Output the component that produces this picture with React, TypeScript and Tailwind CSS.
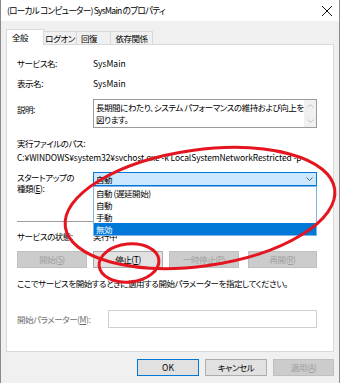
import React from 'react';

const font = "font-['Noto_Sans_CJK_JP',sans-serif] [font-feature-settings:'palt']";

function Mn({ c }: { c: string }) {
  return <span className="underline underline-offset-1">{c}</span>;
}

function Btn({ children, disabled, w, primary }: { children: React.ReactNode; disabled?: boolean; w: string; primary?: boolean }) {
  return (
    <div
      className={`${w} h-[17px] flex items-center justify-center border ${
        disabled
          ? 'bg-[#cccccc] border-[#bfbfbf] text-[#a0a0a0]'
          : primary
          ? 'bg-[#e1e1e1] border-[#0078d7] text-black'
          : 'bg-[#e1e1e1] border-[#adadad] text-black'
      }`}
    >
      {children}
    </div>
  );
}

export default function App() {
  return (
    <div className={`${font} relative w-[340px] h-[383px] overflow-hidden bg-[#f0f0f0] border-x border-[#8a8a8a] text-[8.5px] tracking-[-0.45px] text-black`}>
      {/* Title bar */}
      <div className="h-[21px] bg-white flex items-center justify-between pl-[6px] pr-[5px]">
        <span className="text-[8.6px] tracking-[-0.75px]">(ローカル コンピューター) SysMain のプロパティ</span>
        <svg width="12" height="12" viewBox="0 0 12 12" className="mr-[1px]">
          <path d="M1 1 L11 11 M11 1 L1 11" stroke="#111" strokeWidth="1" fill="none" />
        </svg>
      </div>

      {/* Tabs */}
      <div className="pl-[5px] pt-[8px] flex items-end h-[23px] whitespace-nowrap">
        <div className="relative z-10 h-[16px] -mb-px w-[38px] bg-white border border-b-0 border-[#d9d9d9] flex items-center pl-[5px]">全般</div>
        <div className="h-[13px] w-[33px] border border-l-0 border-b-0 border-[#d9d9d9] bg-[#f0f0f0] flex items-center justify-center">ログオン</div>
        <div className="h-[13px] w-[34px] border border-l-0 border-b-0 border-[#d9d9d9] bg-[#f0f0f0] flex items-center pl-[4px]">回復</div>
        <div className="h-[13px] w-[42px] border border-l-0 border-b-0 border-[#d9d9d9] bg-[#f0f0f0] flex items-center justify-center">依存関係</div>
      </div>

      {/* Panel */}
      <div className="ml-[5px] w-[328px] h-[308px] bg-white border border-[#d9d9d9] pl-[10px] pt-[10px]">
        <div className="flex h-[16px] items-center">
          <div className="w-[76px]">サービス名:</div>
          <div className="tracking-normal">SysMain</div>
        </div>
        <div className="flex h-[16px] items-center mt-[4px]">
          <div className="w-[76px]">表示名:</div>
          <div className="tracking-normal">SysMain</div>
        </div>
        <div className="flex mt-[8px]">
          <div className="w-[76px] pt-[2px] leading-[16px]">説明:</div>
          <div className="relative w-[224px] h-[29px] border border-[#9a9a9a] flex">
            <div className="flex-1 pl-[2px] pt-px leading-[12px]">
              長期間にわたり、システム パフォーマンスの維持および向上を図ります。
            </div>
            <div className="w-[12px] h-full bg-[#f0f0f0] flex flex-col items-center justify-between py-[4px]">
              <svg width="7" height="4" viewBox="0 0 7 4">
                <path d="M0.5 3.5 L3.5 0.5 L6.5 3.5" stroke="#c2c2c2" fill="none" />
              </svg>
              <svg width="7" height="4" viewBox="0 0 7 4">
                <path d="M0.5 0.5 L3.5 3.5 L6.5 0.5" stroke="#c2c2c2" fill="none" />
              </svg>
            </div>
          </div>
        </div>
        <div className="mt-[8px] h-[14px] leading-[14px]">実行ファイルのパス:</div>
        <div className="h-[14px] leading-[14px] tracking-[-0.1px] whitespace-nowrap">C:¥WINDOWS¥system32¥svchost.exe -k LocalSystemNetworkRestricted -p</div>

        <div className="flex mt-[8px]">
          <div className="w-[76px] leading-[11px]">
            <div>スタートアップの</div>
            <div>
              種類(<Mn c="E" />):
            </div>
          </div>
          <div className="relative w-[224px] h-[14px] bg-[#cce8ff] border border-[#0078d7] flex items-center justify-between pl-[2px] pr-[3px]">
            <span>自動</span>
            <svg width="7" height="4" viewBox="0 0 7 4">
              <path d="M0.5 0.5 L3.5 3.5 L6.5 0.5" stroke="#606060" fill="none" />
            </svg>
            {/* open list */}
            <div className="absolute left-[-1px] top-[13px] z-10 w-[224px] bg-white border border-[#7eb4ea]">
              <div className="h-[12px] leading-[12px] pl-[2px]">自動 (遅延開始)</div>
              <div className="h-[12px] leading-[12px] pl-[2px]">自動</div>
              <div className="h-[12px] leading-[12px] pl-[2px]">手動</div>
              <div className="h-[12px] leading-[12px] pl-[2px] bg-[#0078d7] text-white">無効</div>
            </div>
          </div>
        </div>

        <div className="mt-[27px] w-[300px] h-px bg-[#a0a0a0]" />

        <div className="flex h-[16px] items-center mt-[6px]">
          <div className="w-[76px]">サービスの状態:</div>
          <div>実行中</div>
        </div>

        <div className="flex mt-[7px]">
          <Btn w="w-[70px]" disabled>
            開始(<Mn c="S" />)
          </Btn>
          <div className="ml-[6px]">
            <Btn w="w-[70px]">
              停止(<Mn c="T" />)
            </Btn>
          </div>
          <div className="ml-[6px]">
            <Btn w="w-[70px]" disabled>
              一時停止(<Mn c="P" />)
            </Btn>
          </div>
          <div className="ml-[9px]">
            <Btn w="w-[69px]" disabled>
              再開(<Mn c="R" />)
            </Btn>
          </div>
        </div>

        <div className="h-[16px] leading-[16px] mt-[7px] whitespace-nowrap">ここでサービスを開始するときに適用する開始パラメーターを指定してください。</div>

        <div className="flex items-center mt-[19px]">
          <div className="w-[91px] text-[#6d6d6d]">
            開始パラメーター(<Mn c="M" />):
          </div>
          <div className="w-[209px] h-[18px] border border-[#cfcfcf] bg-white" />
        </div>
      </div>

      {/* Dialog buttons */}
      <div className="flex justify-end gap-[6px] pr-[5px] mt-[7px]">
        <Btn w="w-[62px]" primary>
          <span className="tracking-normal">OK</span>
        </Btn>
        <Btn w="w-[62px]">キャンセル</Btn>
        <Btn w="w-[61px]" disabled>
          適用(<Mn c="A" />)
        </Btn>
      </div>

      {/* red annotations */}
      <svg className="absolute inset-0 z-20 pointer-events-none" width="340" height="383" viewBox="0 0 340 383">
        <ellipse cx="199" cy="208" rx="136" ry="58" transform="rotate(-8 199 208)" fill="none" stroke="#e4151e" strokeWidth="3" />
        <ellipse cx="128" cy="263" rx="30" ry="19" transform="rotate(-6 128 263)" fill="none" stroke="#e4151e" strokeWidth="3" />
      </svg>
    </div>
  );
}
